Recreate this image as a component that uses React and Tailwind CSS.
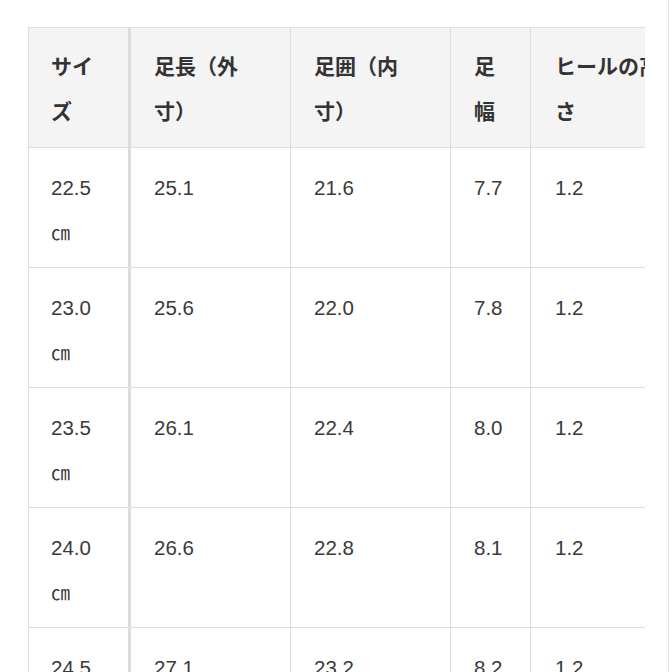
import React from "react";

const font = { fontFamily: '"Liberation Sans", "Noto Sans CJK JP", sans-serif' };

const headers = [
  ["サイ", "ズ"],
  ["足長（外", "寸）"],
  ["足囲（内", "寸）"],
  ["足", "幅"],
  ["ヒールの高", "さ"],
];

const rows = [
  ["22.5", "25.1", "21.6", "7.7", "1.2"],
  ["23.0", "25.6", "22.0", "7.8", "1.2"],
  ["23.5", "26.1", "22.4", "8.0", "1.2"],
  ["24.0", "26.6", "22.8", "8.1", "1.2"],
  ["24.5", "27.1", "23.2", "8.2", "1.2"],
];

const colCls = [
  "w-[102px] shrink-0 border-r-[3px] border-[#dcdcdc] pl-[22px]",
  "w-[160px] shrink-0 border-r border-[#dddddd] pl-[23px]",
  "w-[160px] shrink-0 border-r border-[#dddddd] pl-[23px]",
  "w-[80px] shrink-0 border-r border-[#dddddd] pl-[23px]",
  "w-[150px] shrink-0 border-r border-[#dddddd] pl-[24px]",
];

function Row({ children, header }) {
  return (
    <div className={"flex h-[120px] " + (header ? "bg-[#f4f4f4]" : "bg-white")}>
      {children}
    </div>
  );
}

export default function App() {
  return (
    <div className="w-[672px] h-[672px] overflow-hidden bg-white text-[#333333]" style={font}>
      <div className="w-[669px] h-full border-r border-[#e6e6e6] pt-[27px] pl-[28px]">
        <div className="w-[617px] overflow-hidden">
          <div className="w-[700px] border-l border-t border-[#dddddd]">
            <Row header>
              {headers.map((h, i) => (
                <div
                  key={i}
                  className={colCls[i] + " h-full border-b border-b-[#dddddd] pt-[16px] text-[21px] leading-[45px] font-bold text-[#333333] whitespace-nowrap"}
                >
                  {h[0]}
                  <br />
                  {h[1]}
                </div>
              ))}
            </Row>
            {rows.map((r, ri) => (
              <Row key={ri}>
                {r.map((c, i) => (
                  <div
                    key={i}
                    className={colCls[i] + " h-full border-b border-b-[#dddddd] pt-[17px] text-[20.5px] leading-[45px] text-[#3a3a3a] whitespace-nowrap"}
                  >
                    {c}
                    {i === 0 && (
                      <>
                        <br />
                        <span className="text-[19px]">㎝</span>
                      </>
                    )}
                  </div>
                ))}
              </Row>
            ))}
          </div>
        </div>
      </div>
    </div>
  );
}
